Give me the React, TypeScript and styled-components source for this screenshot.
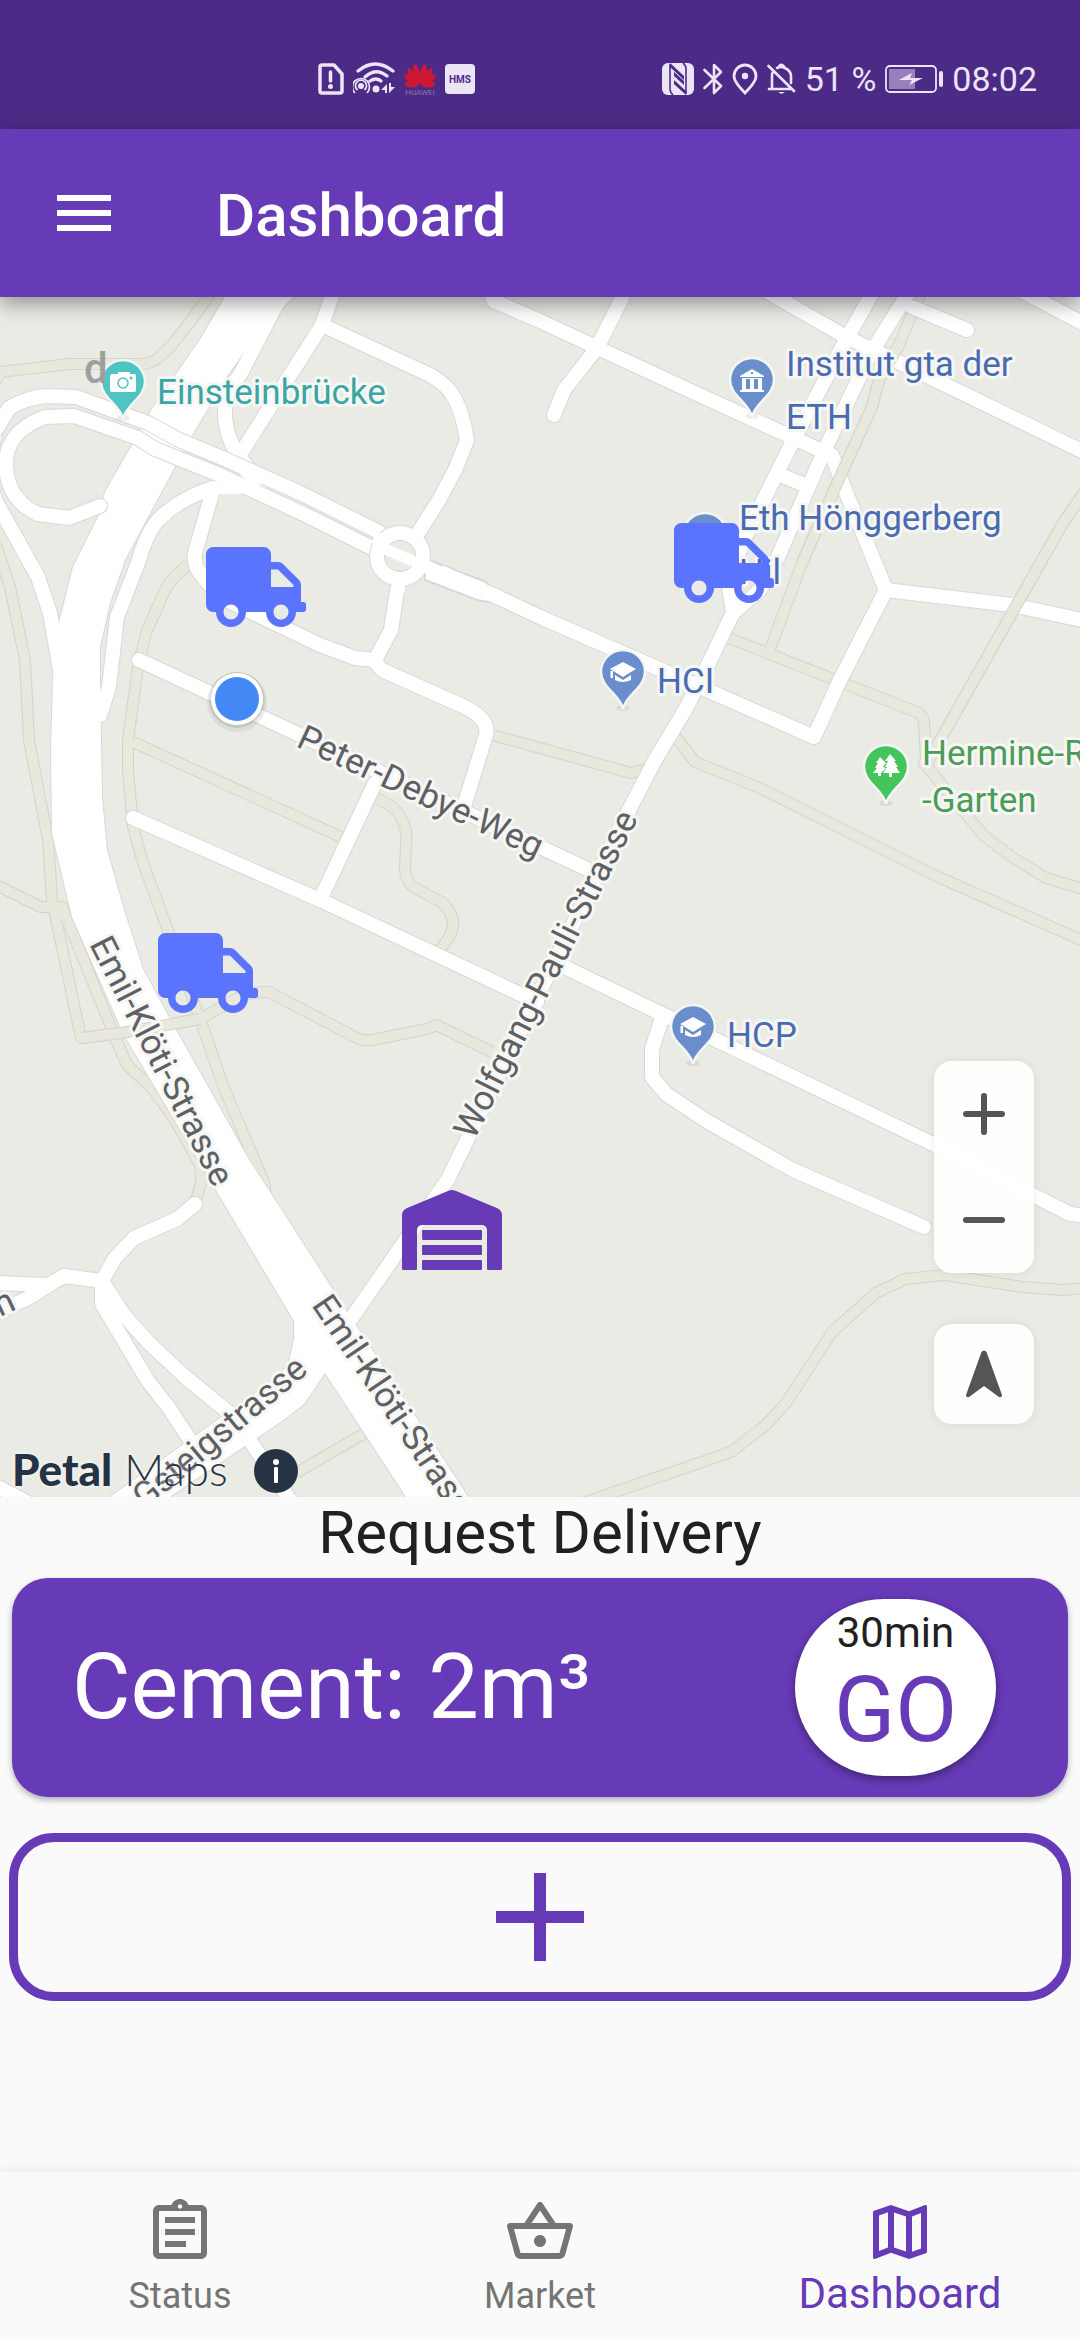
import React from 'react';
import styled, { createGlobalStyle } from 'styled-components';
import { FaTruck, FaWarehouse } from 'react-icons/fa';
import {
  MdMenu,
  MdOutlineAssignment,
  MdOutlineMap,
  MdOutlineShoppingBasket,
} from 'react-icons/md';

const purple = '#673ab7';
const surface = '#fafafa';
const sans = 'Roboto, "Noto Sans", sans-serif';

const GlobalStyle = createGlobalStyle`
  *, *::before, *::after { box-sizing: border-box; }
  body { margin: 0; background: ${surface}; font-family: ${sans}; }
  button { font-family: inherit; border: 0; padding: 0; background: none; cursor: pointer; }
`;

const Screen = styled.div`
  display: flex;
  flex-direction: column;
  min-height: 100vh;
  background: ${surface};
  color: #212121;
`;

/* ---------- status bar ---------- */

const StatusBar = styled.div`
  display: flex;
  align-items: center;
  justify-content: space-between;
  height: 129px;
  padding: 28px 43px 0 317px;
  background: #4c2b87;
  color: #ece4f7;
  font-size: 34px;
  line-height: 40px;
`;

const StatusGroup = styled.div<{ $gap: number }>`
  display: flex;
  align-items: center;
  gap: ${(p) => p.$gap}px;
  white-space: nowrap;

  svg { display: block; flex: none; }
`;

const SimIcon = () => (
  <svg width="28" height="34" viewBox="0 0 28 34" fill="none" stroke="currentColor" strokeWidth="3.500">
    <path d="M5 3H17L25 12V29Q25 31 23 31H5Q3 31 3 29V5Q3 3 5 3Z" strokeLinejoin="round" />
    <path d="M13.500 10V19" strokeLinecap="round" />
    <circle cx="13.500" cy="24.500" r="2.500" fill="currentColor" stroke="none" />
  </svg>
);

const WifiIcon = () => (
  <svg width="42" height="34" viewBox="0 0 42 34" fill="none" stroke="currentColor">
    <path d="M5 9Q22-5 40 9M12 15Q23 5 34 14M17 19Q23 15 28 19" strokeWidth="3.200" strokeLinecap="round" />
    <circle cx="8" cy="24" r="3" fill="currentColor" stroke="none" />
    <path d="M4.500 28A5.500 5.500 0 1 1 11.500 28M2 31A8.500 8.500 0 1 1 14 31" strokeWidth="1.700" />
    <circle cx="23" cy="27" r="3.500" fill="currentColor" stroke="none" />
    <path d="M34 22V31H32V28H28ZM36 21V31L42 25H38V21Z" fill="currentColor" stroke="none" />
  </svg>
);

const petals = [
  { angle: 86, length: 0.7 },
  { angle: 56, length: 0.86 },
  { angle: 33, length: 0.98 },
  { angle: 11, length: 1.04 },
];

const HuaweiIcon = () => (
  <svg width="34" height="36" viewBox="0 0 34 36">
    <g fill="#cf1733">
      {petals.flatMap(({ angle, length }) => [-1, 1].map((side) => (
        <path
          key={angle * side}
          d="M0 0C-5-6-5-17-1-20Q0-21 1-20C5-17 5-6 0 0Z"
          transform={`translate(${17 + side} 24) rotate(${angle * side}) scale(.8 ${length})`}
        />
      )))}
    </g>
    <text x="17" y="34" textAnchor="middle" fontFamily="Roboto, sans-serif" fontSize="8" fill="#8b76a8">HUAWEI</text>
  </svg>
);

const HmsIcon = () => (
  <svg width="30" height="30" viewBox="0 0 30 30">
    <rect width="30" height="30" rx="4" fill="currentColor" />
    <text x="15" y="18.500" textAnchor="middle" fontFamily="Roboto, sans-serif" fontWeight="700" fontSize="10" fill="#4c2b87">HMS</text>
  </svg>
);

const NfcIcon = () => (
  <svg width="32" height="32" viewBox="0 0 32 32">
    <rect width="32" height="32" rx="6" fill="currentColor" />
    <g fill="none" stroke="#4c2b87" strokeWidth="1.600">
      <path d="M11 32Q8 30 8 26V1" />
      <path d="M21 0Q24 2 24 6V31" />
    </g>
    <path d="M8 0L22 13V17L8 4ZM12 9L22 18V22L12 13ZM12 17L24 28V32L12 21Z" fill="#4c2b87" />
  </svg>
);

const BluetoothIcon = () => (
  <svg width="20" height="32" viewBox="0 0 20 32" fill="none" stroke="currentColor" strokeWidth="2.600" strokeLinejoin="round" strokeLinecap="round">
    <path d="M1.500 7L18 23L11 30V2L18 9L1.500 25" />
  </svg>
);

const PlaceIcon = () => (
  <svg width="26" height="32" viewBox="0 0 26 32">
    <path d="M13 2A11 11 0 0 1 24 13C24 20 17 25 13 30C9 25 2 20 2 13A11 11 0 0 1 13 2Z" fill="none" stroke="currentColor" strokeWidth="2.800" />
    <circle cx="13" cy="13" r="3.200" fill="currentColor" />
  </svg>
);

const BellOffIcon = () => (
  <svg width="29" height="32" viewBox="0 0 29 32" fill="none" stroke="currentColor" strokeWidth="2.600" strokeLinecap="round">
    <path d="M1.500 3L27 28M2 26H24M5 25V12Q5 10 6 9M10 5Q14 3 18 5Q24 8 24 13V20M12 3.500Q14 0 17 3.500" />
    <path d="M11 29H18L14.500 31Z" fill="currentColor" stroke="none" />
  </svg>
);

const BatteryIcon = () => (
  <svg width="58" height="28" viewBox="0 0 58 28">
    <rect x="1" y="1" width="50" height="26" rx="4" fill="none" stroke="currentColor" strokeWidth="1.800" />
    <rect x="4" y="4" width="26" height="20" fill="#9880bd" />
    <path d="M14 15L27 8L25 13H38L24 20L27 15Z" fill="currentColor" />
    <rect x="54" y="6" width="4" height="16" rx="2" fill="currentColor" />
  </svg>
);

/* ---------- app bar ---------- */

const AppBar = styled.header`
  position: relative;
  z-index: 1;
  display: flex;
  align-items: center;
  gap: 96px;
  height: 168px;
  padding: 0 48px;
  background: ${purple};
  color: #fff;
  box-shadow: 0 6px 20px rgba(0, 0, 0, 0.4);
`;

const MenuButton = styled.button`
  display: flex;
  color: inherit;
`;

const Title = styled.h1`
  margin: 0;
  padding-top: 5px;
  font-size: 60px;
  line-height: 72px;
  font-weight: 500;
`;

/* ---------- map ---------- */

const MapArea = styled.section`
  position: relative;
  overflow: hidden;
  background: #e9ebe4;
`;

const MapDrawing = styled.svg`
  display: block;
  width: 100%;
  height: auto;
`;

const MapLabel = styled.text<{ $fill: string }>`
  font-family: ${sans};
  font-size: 35px;
  fill: ${(p) => p.$fill};
  stroke: #f6f7f4;
  stroke-width: 6px;
  stroke-linejoin: round;
  paint-order: stroke;
`;

const StrayLabel = styled.text`
  font-family: ${sans};
  font-size: 42px;
  font-weight: 500;
  fill: #9e9e9e;
`;

const MapControls = styled.div`
  position: absolute;
  right: 46px;
  bottom: 73px;
  display: flex;
  flex-direction: column;
  gap: 51px;
`;

const ControlPanel = styled.div`
  display: flex;
  flex-direction: column;
  width: 100px;
  border-radius: 18px;
  background: rgba(255, 255, 255, 0.92);
  box-shadow: 0 0 10px rgba(0, 0, 0, 0.08);
`;

const ControlButton = styled.button<{ $height: number }>`
  display: flex;
  align-items: center;
  justify-content: center;
  height: ${(p) => p.$height}px;
  color: #555;
`;

const Attribution = styled.div`
  position: absolute;
  left: 12px;
  bottom: 0;
  display: flex;
  align-items: center;
  gap: 26px;
`;

const Brand = styled.span`
  padding-bottom: 4px;
  font-family: Lato, sans-serif;
  font-size: 44px;
  line-height: 48px;
  font-weight: 300;
  color: #263345;
  text-shadow: 0 0 4px #fff;

  strong { font-weight: 900; }
`;

const InfoButton = styled.button`
  display: flex;
  border-radius: 50%;
  background: #263345;
`;

type Line = string;

/* Footpaths, as centre lines. */
const paths: Line[] = [
  'M-6 384L0 372L69 364L142 364Q153 363 158 358L171 346L190 322L213 290',
  'M-4 545L10 587L25 660L29 740L48 840L52 900L81 1038L121 1033L200 1019L238 998Q250 992 269 992L355 1037Q362 1041 372 1040L427 1029L436 1025L492 1052',
  'M-4 885L41 907L62 907L117 1042L127 1065L152 1088L175 1120L200 1165L201 1183L195 1204',
  'M188 565Q168 580 162 597L146 633L138 667L128 740V770L133 827L143 863L169 933L200 1019L224 1088L265 1185V1195',
  'M133 742L341 837',
  'M375 798Q396 806 401 818Q408 830 406 845L405 870Q406 882 415 888L441 902Q454 912 453 926Q451 938 437 953',
  'M492 735L540 748L631 773L650 768',
  'M729 638L919 713L924 720L926 760L924 763L984 836L1012 857L1046 878L1086 890',
  'M676 737L695 762L760 788L936 876L1086 942',
  'M1086 490L1063 523L939 742L926 765',
  'M922 290L898 347L879 380L872 407L843 470L802 563L769 652',
  'M1086 1288L1063 1290L1022 1287L945 1275L905 1279L876 1293L833 1331L786 1403L766 1425L731 1452L574 1506',
  'M365 1433L296 1473',
];

/* Stretches where a footpath bridges a street. */
const pathBridges: Line[] = [
  'M81 1038L121 1033L200 1019',
  'M898 347L879 380L872 407L843 470L802 563',
  'M1086 490L1063 523L939 742',
];

/* Ordinary streets, as centre lines. */
const streets: Line[] = [
  'M334 290L322 325L289 377L243 450',
  'M322 325L430 375Q449 386 455 399Q463 415 467 440L455 470L439 500L415 538',
  'M284 290L241 373Q225 395 225 412Q225 440 244 463L262 482',
  'M490 290L494 301L540 321L598 348L695 393L820 450',
  'M626 290L597 348L564 390L554 415',
  'M764 290L846 337L888 357L1086 453',
  'M912 307L967 330',
  'M1020 290L1086 325',
  'M874 290L846 340L795 437L747 533L728 580L733 613',
  'M910 290L871 353L826 447L778 557L760 590L733 613',
  'M785 477L805 485',
  'M832 455L845 490L886 590L1012 605L1086 621',
  'M886 590L840 680L814 737L657 668L540 617L489 593L425 565',
  'M733 613L702 677L685 710L655 760L628 812L468 1138L448 1179L351 1319L315 1366',
  'M-2 427Q-16 460-5 500L38 577L50 613L60 670L70 720',
  'M213 488Q180 498 158 520Q146 534 138 563L117 617L109 687L100 715',
  'M213 490L195 553Q193 566 203 577L220 597L320 645L355 658L374 660L382 670L465 707Q490 720 486 735L465 803',
  'M399 578L391 630L375 660',
  'M139 660L600 875',
  'M375 783L320 900',
  'M133 818L320 900L537 1002',
  'M552 961L666 1016L933 1144L1070 1214L1090 1216',
  'M662 1018L652 1049V1077L666 1094L705 1120L793 1170L924 1227',
  'M195 1204L177 1219L134 1238L115 1258L102 1281L64 1276L48 1285L-6 1283',
  'M52 1283L28 1298L-6 1314',
  'M102 1281V1304L148 1381L169 1408L200 1455',
  'M102 1281L124 1315L148 1342L183 1375L234 1417L292 1503',
  'M-6 1485L34 1506',
];

const highway =
  'M229 290L201 338L148 415L133 443L105 492L100 513L73 567L58 627L53 677L51 750L52 833L72 917L124 1035L213 1185L294 1321L294 1340L288 1366L255 1393L110 1497L143 1515L282 1421L304 1404L325 1373L412 1506L474 1506L348 1313L248 1158L170 1019L143 969L124 910L107 850L102 797L100 680V647L110 603L125 560L157 500L176 465L191 437L228 375L256 335L300 290Z';

const carriageways: Line[] = [
  'M-4 430L9 408Q26 398 45 396L76 397L148 423L179 440L227 460L300 493L379 532',
  'M100 506L69 518L38 514Q18 505 10 486Q3 465 8 450Q15 428 45 417L74 416L138 438L155 449L220 475L310 517L376 550',
];

interface PinProps {
  x: number;
  y: number;
  color: string;
  children?: React.ReactNode;
}

/* Pin whose tip stands at (x, y); the glyph is drawn about the head's centre. */
const Pin = ({ x, y, color, children }: PinProps) => (
  <g transform={`translate(${x} ${y})`}>
    <ellipse cx="0" cy="0" rx="7" ry="3" fill="#000" opacity=".07" />
    <path d="M0 1C-3-14-22-20-22-36A22 22 0 0 1 22-36C22-20 3-14 0 1Z" fill={color} stroke="#f4f6f3" strokeWidth="2.500" />
    <g transform="translate(0 -36)">{children}</g>
  </g>
);

const CapGlyph = () => (
  <g fill="#fff">
    <path d="M0-10L13-3L0 5L-13-3Z" />
    <path d="M-8 3L0 8L8 3V8Q0 12-8 8Z" />
    <path d="M-12.500-1V6H-10V-1Z" />
  </g>
);

const BankGlyph = () => (
  <g>
    <path d="M0-11L12-4V-3H-12V-4ZM-10-2H10V10H12V12H-12V10H-10Z" fill="#fff" />
    <path d="M-6-1H-2V9H-6ZM2-1H6V9H2ZM-1-8H1V-6H-1Z" fill="#6a8ecb" />
  </g>
);

const CameraGlyph = () => (
  <g>
    <path d="M-11-8H-5V-10H7V-8H11Q13-8 13-6V8Q13 10 11 10H-11Q-13 10-13 8V-6Q-13-8-11-8Z" fill="#fff" />
    <circle cx="0" cy="1" r="5" fill="none" stroke="#4fc4c4" strokeWidth="1.500" />
    <circle cx="8" cy="-4" r="1.500" fill="#4fc4c4" />
  </g>
);

const TreeGlyph = () => (
  <path
    d="M4-13L10-6H8L12 0H10L14 6H6V10H3V6H-3L1 0H-1L2-6H-1ZM-6-10L0-4L-3 0L0 1L-5 6H-5V9H-8V6H-13L-9 1H-11L-8-4H-10Z"
    fill="#fff"
  />
);

const blueText = '#4a6bb0';
const streetText = '#5e6063';
const truckBlue = '#5a74ff';

const CityMap = () => (
  <MapDrawing viewBox="0 297 1080 1200" role="img" aria-label="Map of ETH Hönggerberg with vehicles and warehouse">
    <g fill="none" strokeLinejoin="round">
      <g stroke="#d6d3c8" strokeWidth="12">
        {paths.map((d) => <path key={d} d={d} />)}
      </g>
      <g stroke="#e9e8dc" strokeWidth="10">
        {paths.map((d) => <path key={d} d={d} />)}
      </g>
      <g stroke="#d8d8da" strokeWidth="16" strokeLinecap="round">
        <path d={highway} fill="#d8d8da" strokeWidth="2" />
        {streets.map((d) => <path key={d} d={d} />)}
      </g>
      <g stroke="#fff" strokeWidth="14" strokeLinecap="round">
        <path d={highway} fill="#fff" stroke="none" />
        {streets.map((d) => <path key={d} d={d} />)}
      </g>
      {pathBridges.map((d) => (
        <g key={d}>
          <path d={d} stroke="#d6d3c8" strokeWidth="12" />
          <path d={d} stroke="#e9e8dc" strokeWidth="10" strokeLinecap="round" />
        </g>
      ))}
      {carriageways.map((d) => (
        <g key={d} strokeLinecap="round">
          <path d={d} stroke="#d8d8da" strokeWidth="16" />
          <path d={d} stroke="#fff" strokeWidth="14" />
        </g>
      ))}
      <path d="M244 470L262 482M213 488L248 487" stroke="#fff" strokeWidth="13" />
      <path d="M425 559L484 581L494 589L489 602L477 600L425 580Z" fill="#fff" stroke="#d8d8da" strokeWidth="2" />
      <path d="M440 572L500 598" stroke="#fff" strokeWidth="14" />
      <circle cx="400" cy="556" r="23" stroke="#d8d8da" strokeWidth="16" />
      <circle cx="400" cy="556" r="23" stroke="#fff" strokeWidth="14" />
      <path d="M385 549L415 562" stroke="#fff" strokeWidth="11" />
      <path d="M399 582L398 592M413 542L420 530M422 565L434 570M382 541L374 537" stroke="#fff" strokeWidth="13" />
    </g>

    <MapLabel $fill={streetText} transform="translate(295 746) rotate(25)">Peter-Debye-Weg</MapLabel>
    <MapLabel $fill={streetText} transform="translate(474 1141) rotate(-63)">Wolfgang-Pauli-Strasse</MapLabel>
    <MapLabel $fill={streetText} transform="translate(89 944) rotate(63)">Emil-Klöti-Strasse</MapLabel>
    <MapLabel $fill={streetText} transform="translate(311 1305) rotate(56)">Emil-Klöti-Strasse</MapLabel>
    <MapLabel $fill={streetText} transform="translate(145 1510) rotate(-40)">Gsteigstrasse</MapLabel>
    <MapLabel $fill={streetText} transform="translate(0 1317) rotate(-25)">n</MapLabel>

    <Pin x={123} y={418} color="#4fc4c4"><CameraGlyph /></Pin>
    <MapLabel x="157" y="404" $fill="#3aa5a2">Einsteinbrücke</MapLabel>
    <StrayLabel x="84" y="383">d</StrayLabel>

    <Pin x={752} y={416} color="#6a8ecb"><BankGlyph /></Pin>
    <MapLabel $fill={blueText}>
      <tspan x="786" y="376">Institut gta der</tspan>
      <tspan x="786" y="429">ETH</tspan>
    </MapLabel>

    <Pin x={705} y={571} color="#6a8ecb" />
    <MapLabel $fill={blueText}>
      <tspan x="739" y="530">Eth Hönggerberg</tspan>
      <tspan x="739" y="584">Hil</tspan>
    </MapLabel>

    <Pin x={623} y={708} color="#6a8ecb"><CapGlyph /></Pin>
    <MapLabel x="657" y="693" $fill={blueText}>HCI</MapLabel>

    <Pin x={693} y={1063} color="#6a8ecb"><CapGlyph /></Pin>
    <MapLabel x="727" y="1047" $fill={blueText}>HCP</MapLabel>

    <Pin x={886} y={803} color="#43c55c"><TreeGlyph /></Pin>
    <MapLabel $fill="#4a9c57">
      <tspan x="922" y="765">Hermine-R</tspan>
      <tspan x="922" y="812">-Garten</tspan>
    </MapLabel>

    <circle cx="237" cy="702" r="30" fill="#000" opacity=".06" />
    <circle cx="237" cy="700" r="28" fill="#000" opacity=".1" />
    <circle cx="237" cy="699" r="26" fill="#fff" />
    <circle cx="237" cy="699" r="22" fill="#4388f5" />

    <FaTruck x={206} y={537} size={100} color={truckBlue} />
    <FaTruck x={674} y={513} size={100} color={truckBlue} />
    <FaTruck x={158} y={923} size={100} color={truckBlue} />
    <FaWarehouse x={402} y={1180} size={100} color={purple} />
  </MapDrawing>
);

/* ---------- deliveries ---------- */

const Deliveries = styled.main`
  display: flex;
  flex-direction: column;
  flex: 1;
  padding: 0 12px 48px;
`;

const SectionTitle = styled.h2`
  margin: 0;
  padding-bottom: 9px;
  font-size: 60px;
  line-height: 72px;
  font-weight: 400;
  text-align: center;
`;

const DeliveryCard = styled.article`
  display: flex;
  align-items: center;
  justify-content: space-between;
  padding: 21px 72px 21px 60px;
  border-radius: 36px;
  background: ${purple};
  color: #fff;
  box-shadow: 0 3px 6px rgba(0, 0, 0, 0.3);
`;

const Material = styled.span`
  font-size: 90px;
  line-height: 108px;
`;

const GoButton = styled.button`
  display: flex;
  flex-direction: column;
  align-items: center;
  width: 201px;
  height: 177px;
  padding-top: 9px;
  border-radius: 90px;
  background: #fff;
  box-shadow: 0 3px 8px rgba(0, 0, 0, 0.4);
`;

const Eta = styled.span`
  font-size: 42px;
  line-height: 50px;
  color: #212121;
`;

const Go = styled.span`
  font-size: 90px;
  line-height: 106px;
  color: ${purple};
`;

const AddButton = styled.button`
  display: flex;
  align-items: center;
  justify-content: center;
  height: 168px;
  margin: 36px -3px 0;
  border: 9px solid ${purple};
  border-radius: 45px;
  color: ${purple};
`;

/* ---------- bottom navigation ---------- */

const BottomNav = styled.nav`
  display: grid;
  grid-template-columns: repeat(3, 1fr);
  height: 168px;
  background: ${surface};
  box-shadow: 0 -2px 10px rgba(0, 0, 0, 0.08);
`;

const NavItem = styled.a<{ $active?: boolean }>`
  display: flex;
  flex-direction: column;
  align-items: center;
  padding-top: 24px;
  color: ${(p) => (p.$active ? purple : '#757575')};
  font-size: ${(p) => (p.$active ? 42 : 36)}px;
  line-height: ${(p) => (p.$active ? 52 : 56)}px;
  text-decoration: none;

  svg { display: block; flex: none; }
`;

export default function App() {
  return (
    <>
      <GlobalStyle />
      <Screen>
        <StatusBar>
          <StatusGroup $gap={8}>
            <SimIcon />
            <WifiIcon />
            <HuaweiIcon />
            <HmsIcon />
          </StatusGroup>
          <StatusGroup $gap={9}>
            <NfcIcon />
            <BluetoothIcon />
            <PlaceIcon />
            <BellOffIcon />
            <span>51 %</span>
            <BatteryIcon />
            <span>08:02</span>
          </StatusGroup>
        </StatusBar>

        <AppBar>
          <MenuButton aria-label="Open menu"><MdMenu size={72} /></MenuButton>
          <Title>Dashboard</Title>
        </AppBar>

        <MapArea>
          <CityMap />
          <Attribution>
            <Brand><strong>Petal</strong> Maps</Brand>
            <InfoButton aria-label="Map information">
              <svg width="44" height="44" viewBox="0 0 44 44" fill="#fff">
                <circle cx="22" cy="13" r="3" />
                <rect x="20" y="18" width="4" height="16" rx="1" />
              </svg>
            </InfoButton>
          </Attribution>
          <MapControls>
            <ControlPanel>
              <ControlButton $height={106} aria-label="Zoom in">
                <svg width="42" height="42" viewBox="0 0 42 42" stroke="currentColor" strokeWidth="6" strokeLinecap="round">
                  <path d="M3 21H39M21 3V39" />
                </svg>
              </ControlButton>
              <ControlButton $height={106} aria-label="Zoom out">
                <svg width="42" height="42" viewBox="0 0 42 42" stroke="currentColor" strokeWidth="6" strokeLinecap="round">
                  <path d="M3 21H39" />
                </svg>
              </ControlButton>
            </ControlPanel>
            <ControlPanel>
              <ControlButton $height={100} aria-label="My location">
                <svg width="36" height="48" viewBox="0 0 36 48" fill="currentColor">
                  <path d="M15.500 2Q18-1 20.500 2L36 45Q36 48 33 47L18 36L3 47Q0 48 0 45Z" />
                </svg>
              </ControlButton>
            </ControlPanel>
          </MapControls>
        </MapArea>

        <Deliveries>
          <SectionTitle>Request Delivery</SectionTitle>
          <DeliveryCard>
            <Material>Cement: 2m³</Material>
            <GoButton>
              <Eta>30min</Eta>
              <Go>GO</Go>
            </GoButton>
          </DeliveryCard>
          <AddButton aria-label="Add delivery">
            <svg width="88" height="88" viewBox="0 0 88 88" stroke="currentColor" strokeWidth="12">
              <path d="M0 44H88M44 0V88" />
            </svg>
          </AddButton>
        </Deliveries>

        <BottomNav>
          <NavItem href="#status"><MdOutlineAssignment size={72} />Status</NavItem>
          <NavItem href="#market"><MdOutlineShoppingBasket size={72} />Market</NavItem>
          <NavItem href="#dashboard" $active aria-current="page"><MdOutlineMap size={72} />Dashboard</NavItem>
        </BottomNav>
      </Screen>
    </>
  );
}
